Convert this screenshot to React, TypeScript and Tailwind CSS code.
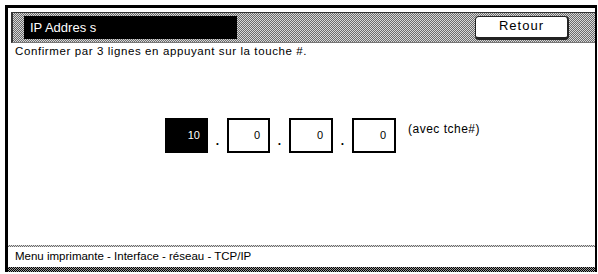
import React from "react";

const dots = "bg-[repeating-conic-gradient(#6b6b6b_0%_25%,#d8d8d8_0%_50%)] bg-[length:2px_2px]";
const darkDots = "bg-[repeating-conic-gradient(#000_0%_25%,#9a9a9a_0%_50%)] bg-[length:2px_2px]";

function Box({ value, active, w }: { value: string; active?: boolean; w: string }) {
  return (
    <div
      className={
        w +
        " h-[35px] flex items-center justify-end pr-[8px] text-[11px] " +
        (active ? "bg-black text-white" : "bg-white text-black border-2 border-black")
      }
    >
      {value}
    </div>
  );
}

function Dot() {
  return (
    <div className="w-[19px] flex justify-center items-end h-[35px] pb-[6px] text-[12px] leading-none font-bold text-black">
      .
    </div>
  );
}

export default function App() {
  return (
    <div
      className="w-[598px] h-[274px] bg-white pt-[5px] pl-[5px] pr-[1px] pb-[2px] text-black"
      style={{ fontFamily: '"Liberation Sans", Arial, sans-serif' }}
    >
      <div className="h-full flex flex-col border-l-[3px] border-t-[3px] border-r-[2px] border-black">
        <div className="h-[4px] bg-white" />
        <div
          className={
            "ml-[3px] h-[31px] flex items-center justify-between border-t border-l-[2px] border-[#333] border-b border-b-[#777] pl-[11px] pr-[26px] " +
            dots
          }
        >
          <div className="w-[213px] h-[23px] bg-black text-white text-[13px] flex items-center pl-[6px]">
            IP Addres s
          </div>
          <div className="w-[94px] h-[24px] bg-white rounded-[4px] border border-[#222] border-r-[2px] border-b-[3px] flex justify-center pt-[1px] text-[13px] leading-[16px] tracking-[1px]">
            Retour
          </div>
        </div>
        <div className="flex-1 flex flex-col">
          <div className="pl-[7px] pt-[1px] text-[11.5px] leading-[14px] tracking-[0.6px]">
            Confirmer par 3 lignes en appuyant sur la touche #.
          </div>
          <div className="mt-[60px] pl-[157px] flex items-start">
            <Box value="10" active w="w-[43px]" />
            <Dot />
            <Box value="0" w="w-[43px]" />
            <Dot />
            <Box value="0" w="w-[44px]" />
            <Dot />
            <Box value="0" w="w-[44px]" />
            <div className="ml-[12px] text-[12px] tracking-[0.5px] mt-[2px]">(avec tche#)</div>
          </div>
        </div>
        <div className={"h-[2px] " + dots} />
        <div className="h-[20px] pl-[7px] flex items-center text-[11.5px]">
          Menu imprimante - Interface - réseau - TCP/IP
        </div>
        <div className={"h-[5px] " + darkDots} />
      </div>
    </div>
  );
}
